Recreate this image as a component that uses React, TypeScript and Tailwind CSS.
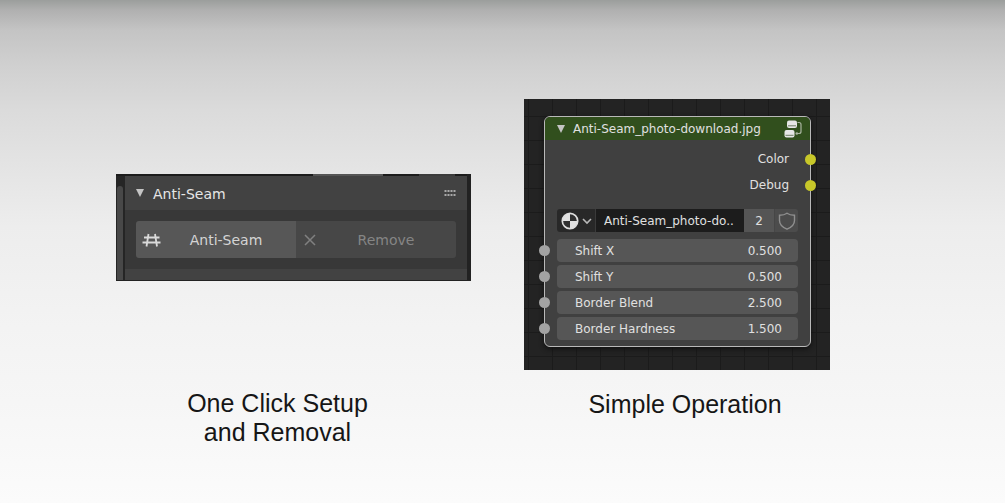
import type { ReactNode } from 'react';

const params = [
  { id: 'shift-x', label: 'Shift X', value: '0.500' },
  { id: 'shift-y', label: 'Shift Y', value: '0.500' },
  { id: 'border-blend', label: 'Border Blend', value: '2.500' },
  { id: 'border-hardness', label: 'Border Hardness', value: '1.500' },
];

const outputs = ['Color', 'Debug'];

// Small downward triangle used on collapsible headers
const Disclosure = () => (
  <svg className="h-2 w-2 shrink-0" viewBox="0 0 8 8" aria-hidden="true">
    <path d="M0 0h8L4 8z" fill="#c4c4c4" />
  </svg>
);

const HashIcon = () => (
  <svg className="h-4 w-5 shrink-0" viewBox="0 0 20 16" fill="none" stroke="#dadada" strokeWidth="1.8" aria-hidden="true">
    <path d="M2 5.500h15.500M0.500 10.500h18M6.500 2L4.500 14.500M13 2l2 12.500" />
  </svg>
);

const CrossIcon = () => (
  <svg className="h-3 w-3 shrink-0" viewBox="0 0 12 12" fill="none" stroke="#808080" strokeWidth="1.5" aria-hidden="true">
    <path d="M1 1l10 10M11 1L1 11" />
  </svg>
);

const GripIcon = () => (
  <svg className="h-2 w-3 shrink-0" viewBox="0 0 12 8" fill="#a8a8a8" aria-hidden="true">
    {[0, 3, 6, 9].map((x) => (
      <g key={x}>
        <rect x={x + 0.5} y="1" width="2" height="2" />
        <rect x={x + 0.5} y="5" width="2" height="2" />
      </g>
    ))}
  </svg>
);

const NodeTreeIcon = () => (
  <svg className="h-[18px] w-[18px] shrink-0" viewBox="0 0 18 18" aria-hidden="true">
    <rect x="3" y="0.5" width="10" height="7.5" rx="2" fill="#e6e6e6" />
    <rect x="0.5" y="10" width="10" height="7.500" rx="2" fill="#e6e6e6" />
    <path d="M4 5.800h8M1.500 15.300h8" stroke="#6f7d64" strokeWidth="1" />
    <path d="M13.500 2.500h1.500q2 0 2 2v7q0 2-2 2h-2" stroke="#aab5a1" strokeWidth="1.2" fill="none" />
    <circle cx="12.800" cy="13.500" r="1.300" fill="#aab5a1" />
  </svg>
);

const MaterialIcon = () => (
  <svg className="h-[18px] w-[18px] shrink-0" viewBox="0 0 18 18" aria-hidden="true">
    <circle cx="9" cy="9" r="7.7" fill="#303030" stroke="#dedede" strokeWidth="1.7" />
    <path d="M9 9V1.500A7.500 7.500 0 0 0 1.500 9zM9 9h7.500A7.500 7.500 0 0 1 9 16.500z" fill="#e2e2e2" />
  </svg>
);

const ChevronIcon = () => (
  <svg className="h-2 w-[10px] shrink-0" viewBox="0 0 10 8" fill="none" stroke="#b8b8b8" strokeWidth="1.6" aria-hidden="true">
    <path d="M1 2l4 4 4-4" />
  </svg>
);

const ShieldIcon = () => (
  <svg className="h-[18px] w-[18px]" viewBox="0 0 18 18" fill="none" stroke="#8f8f8f" strokeWidth="1.4" aria-hidden="true">
    <path d="M9 1.200C7 2.700 4.500 3.200 1.500 3.200V8.500C1.500 12.500 4.500 15.300 9 17.200 13.500 15.300 16.500 12.500 16.500 8.500V3.200C13.500 3.200 11 2.700 9 1.200Z" />
  </svg>
);

const Caption = ({ children }: { children: ReactNode }) => (
  <figcaption className="text-center font-['Liberation_Sans',sans-serif] text-[25px] leading-[29px] text-[#161616]">
    {children}
  </figcaption>
);

const SetupPanel = () => (
  <section className="border-r-4 border-b border-[#222] bg-[#383838] text-[14px] leading-5">
    {/* Lower edge of the toolbar above the panel */}
    <div className="flex h-0.5 justify-end bg-[#1c1c1c] pr-3">
      <div className="w-[70px] bg-[#555]" />
      <div className="ml-9 w-9 bg-[#3c3c3c]" />
    </div>
    <div className="flex">
      <div className="flex w-[9px] shrink-0 bg-[#252525] pt-[10px]">
        <div className="mr-0.5 ml-px grow rounded-t-[3px] bg-[#484848]" />
      </div>
      <div className="grow">
        <header className="flex h-[34px] items-center gap-[9px] bg-[#424242] pr-[11px] pl-[11px]">
          <Disclosure />
          <h2 className="grow pt-0.5 text-[#e6e6e6]">Anti-Seam</h2>
          <GripIcon />
        </header>
        <div className="grid grid-cols-2 px-[11px] py-[11px] text-center">
          <button className="flex h-[37px] items-center rounded-l-[3px] bg-[#575757] px-1.5 text-[#d4d4d4]">
            <HashIcon />
            <span className="grow">Anti-Seam</span>
          </button>
          <button className="flex h-[37px] items-center rounded-r-[3px] bg-[#474747] pl-2 text-[#858585]">
            <CrossIcon />
            <span className="grow">Remove</span>
          </button>
        </div>
        <div className="h-[11px] bg-[#424242]" />
      </div>
    </div>
  </section>
);

const GroupNode = () => (
  <div className="rounded-[6px] border border-[#b9b9b9] bg-[#404040] pb-[6px] text-[12px] leading-4 text-[#e0e0e0] shadow-[0_2px_5px_#111]">
    <header className="flex h-[23px] items-center gap-2 rounded-t-[5px] bg-[#314f1d] pr-[8px] pl-3">
      <Disclosure />
      <h2 className="grow whitespace-nowrap">Anti-Seam_photo-download.jpg</h2>
      <NodeTreeIcon />
    </header>
    <ul className="flex flex-col pt-[6px]">
      {outputs.map((name) => (
        <li key={name} className="relative flex h-[26px] items-center justify-end pr-[21px]">
          {name}
          <span className="absolute -right-[6px] h-[11px] w-[11px] rounded-full bg-[#c7c729]" />
        </li>
      ))}
    </ul>
    <div className="mx-3 mt-[11px] flex h-[23px] overflow-hidden rounded-[3px]">
      <button aria-label="Browse node trees" className="flex w-[38px] items-center gap-[3px] bg-[#282828] pl-1">
        <MaterialIcon />
        <ChevronIcon />
      </button>
      <input
        aria-label="Node tree name"
        defaultValue="Anti-Seam_photo-do.."
        className="w-0 grow border-l border-[#3a3a3a] bg-[#1c1c1c] pl-2 outline-none"
      />
      <button className="w-[30px] bg-[#555]">2</button>
      <button aria-label="Fake user" className="flex w-6 items-center justify-center border-l border-[#464646] bg-[#4c4c4c]">
        <ShieldIcon />
      </button>
    </div>
    <div className="mt-[7px] flex flex-col gap-[3px]">
      {params.map((p) => (
        <div key={p.id} className="relative mx-3 flex h-[23px] items-center rounded-[4px] bg-[#565656] pr-4 pl-[18px]">
          <span className="absolute -left-[18px] h-[11px] w-[11px] rounded-full bg-[#a3a3a3]" />
          <label htmlFor={p.id} className="grow">
            {p.label}
          </label>
          <input id={p.id} defaultValue={p.value} className="w-16 bg-transparent text-right outline-none" />
        </div>
      ))}
    </div>
  </div>
);

const App = () => (
  <main className="grid min-h-screen grid-cols-[355fr_306fr] items-start gap-[53px] bg-[linear-gradient(#9b9e9c_0%,#b0b0b0_2%,#c4c4c4_6%,#d0d0d0_13%,#dbdbdb_22%,#e3e3e3_32%,#ededed_45%,#f3f3f3_65%,#f6f6f6_80%,#fbfbfb_100%)] pr-[175px] pl-[116px] font-['DejaVu_Sans',sans-serif]">
    <figure className="flex flex-col gap-[108px] pt-[174px]">
      <SetupPanel />
      <div className="pr-8">
        <Caption>
          One Click Setup
          <br />
          and Removal
        </Caption>
      </div>
    </figure>
    <figure className="flex flex-col gap-5 pt-[99px]">
      <div className="bg-[#232323] bg-[linear-gradient(#1b1b1b_1px,transparent_1px),linear-gradient(90deg,#1b1b1b_1px,transparent_1px)] bg-size-[24px_24px] bg-position-[4px_17px] pt-[17px] pr-[19px] pb-[23px] pl-5">
        <GroupNode />
      </div>
      <div className="pl-4">
        <Caption>Simple Operation</Caption>
      </div>
    </figure>
  </main>
);

export default App;
